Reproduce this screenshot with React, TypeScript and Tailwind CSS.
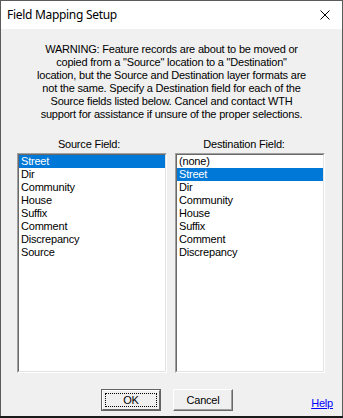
import React from 'react';

const SOURCE = ['Street', 'Dir', 'Community', 'House', 'Suffix', 'Comment', 'Discrepancy', 'Source'];
const DEST = ['(none)', 'Street', 'Dir', 'Community', 'House', 'Suffix', 'Comment', 'Discrepancy'];

const WARNING = [
  'WARNING: Feature records are about to be moved or',
  'copied from a "Source" location to a "Destination"',
  'location, but the Source and Destination layer formats are',
  'not the same. Specify a Destination field for each of the',
  'Source fields listed below. Cancel and contact WTH',
  'support for assistance if unsure of the proper selections.',
];

function ListBox({ items, selected }: { items: string[]; selected: number }) {
  return (
    <div className="w-[150px] h-[220px] bg-white border border-t-[#a0a0a0] border-l-[#a0a0a0] border-r-white border-b-white">
      <div className="h-full border border-t-[#696969] border-l-[#696969] border-r-[#e3e3e3] border-b-[#e3e3e3]">
        {items.map((it, i) => (
          <div
            key={it}
            className={
              'h-[13px] leading-[13px] pl-[2px] ' +
              (i === selected ? 'bg-[#0078d7] text-white' : 'text-black')
            }
          >
            {it}
          </div>
        ))}
      </div>
    </div>
  );
}

export default function App() {
  return (
    <div
      className="w-[343px] h-[418px] bg-[#1a1a1a] text-[11px] text-black tracking-[-0.2px]"
      style={{ fontFamily: '"Liberation Sans", Arial, sans-serif' }}
    >
      <div className="w-[343px] h-[416px] flex flex-col border-x border-t border-[#5b5b5b] bg-[#f0f0f0]">
        {/* title bar */}
        <div className="h-[28px] bg-white flex items-center justify-between pl-[6px] pr-[11px] shrink-0">
          <span
            className="text-[12px] text-black tracking-[-0.3px]"
            style={{ fontFamily: '"Noto Sans", "Open Sans", sans-serif' }}
          >
            Field Mapping Setup
          </span>
          <svg width="10" height="10" viewBox="0 0 10 10" className="mr-[1px]">
            <path d="M0.5 0.5 L9.5 9.5 M9.5 0.5 L0.5 9.5" stroke="#000" strokeWidth="1" fill="none" />
          </svg>
        </div>

        {/* warning */}
        <div className="pt-[14px] text-center leading-[13px]">
          {WARNING.map((l) => (
            <div key={l}>{l}</div>
          ))}
        </div>

        {/* lists */}
        <div className="flex gap-[8px] pl-[16px] mt-[17px]">
          <div className="flex flex-col w-[150px]">
            <div className="h-[15px] leading-[13px] text-center pr-[6px]">Source Field:</div>
            <ListBox items={SOURCE} selected={0} />
          </div>
          <div className="flex flex-col w-[150px]">
            <div className="h-[15px] leading-[13px] text-center pr-[12px]">Destination Field:</div>
            <ListBox items={DEST} selected={1} />
          </div>
        </div>

        {/* buttons */}
        <div className="grid grid-cols-[1fr_auto_1fr] items-end mt-[16px] pr-[9px]">
          <div />
          <div className="flex gap-[12px]">
            <button className="w-[60px] h-[22px] border border-[#646464] bg-[#f0f0f0] p-0">
              <div className="h-full border border-t-white border-l-white border-r-[#696969] border-b-[#696969] p-[2px]">
                <div className="h-full border border-dotted border-black flex items-center justify-center leading-none">
                  OK
                </div>
              </div>
            </button>
            <button className="w-[60px] h-[22px] bg-[#f0f0f0] border border-t-white border-l-white border-r-[#696969] border-b-[#696969] shadow-[inset_-1px_-1px_0_#a0a0a0] flex items-center justify-center leading-none p-0">
              Cancel
            </button>
          </div>
          <div className="justify-self-end">
            <span className="text-[#0000ff] underline leading-[13px]">Help</span>
          </div>
        </div>
      </div>
    </div>
  );
}
